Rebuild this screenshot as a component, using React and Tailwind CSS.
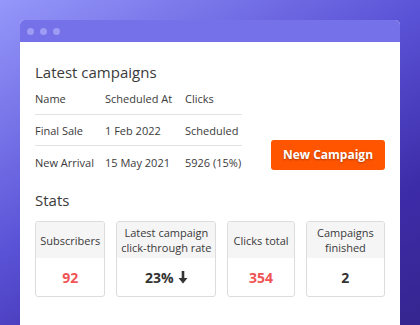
import React from 'react';

const rows = [
  { name: 'Final Sale', date: '1 Feb 2022', clicks: 'Scheduled' },
  { name: 'New Arrival', date: '15 May 2021', clicks: '5926 (15%)' },
];

const stats = [
  { label: 'Subscribers', value: '92', red: true, w: 'w-[71px]' },
  { label: 'Latest campaign click-through rate', value: '23%', arrow: true, w: 'w-[101px]' },
  { label: 'Clicks total', value: '354', red: true, w: 'w-[68px]' },
  { label: 'Campaigns finished', value: '2', w: 'w-[80px]' },
];

const App = () => {
  return (
    <div
      className="w-[420px] h-[325px] overflow-hidden bg-[linear-gradient(150deg,#9597fa_0%,#5a52d6_45%,#3d2ca8_75%,#35258f_100%)] pt-5 px-5"
      style={{ fontFamily: '"Open Sans", sans-serif' }}
    >
      <div className="h-full rounded-t-[5px] overflow-hidden bg-white">
        {/* Title bar */}
        <div className="h-[22px] bg-[#7571e8] flex items-center gap-[6px] pl-[7px]">
          <span className="w-[7px] h-[7px] rounded-full bg-[#9e9bf4]" />
          <span className="w-[7px] h-[7px] rounded-full bg-[#9e9bf4]" />
          <span className="w-[7px] h-[7px] rounded-full bg-[#9e9bf4]" />
        </div>

        <div className="px-[15px] pt-[20px] text-[#3a3a3a]">
          <h2 className="text-[15px] leading-[20px]">Latest campaigns</h2>

          <div className="flex items-start mt-[3px]">
            <div className="w-[207px] text-[11px]">
              <div className="flex h-[30px] items-center border-b border-[#e2e2e2] font-medium">
                <span className="w-[70px]">Name</span>
                <span className="w-[80px]">Scheduled At</span>
                <span>Clicks</span>
              </div>
              {rows.map((r, i) => (
                <div
                  key={r.name}
                  className={`flex h-[31px] pt-[3px] items-center ${i === 0 ? 'border-b border-[#e2e2e2]' : ''}`}
                >
                  <span className="w-[70px]">{r.name}</span>
                  <span className="w-[80px]">{r.date}</span>
                  <span>{r.clicks}</span>
                </div>
              ))}
            </div>
            <button className="ml-[29px] mt-[55px] w-[114px] h-[30px] rounded-[3px] bg-[#ff5500] text-white text-[12px] font-bold [text-shadow:0_1px_2px_rgba(0,0,0,0.35)]">
              New Campaign
            </button>
          </div>

          <h2 className="text-[15px] leading-[20px] mt-[13px]">Stats</h2>

          <div className="flex gap-[11px] mt-[11px]">
            {stats.map((s) => (
              <div
                key={s.label}
                className={`${s.w} h-[76px] rounded-[3px] border border-[#dcdcdc] overflow-hidden flex flex-col`}
              >
                <div className="h-[36px] bg-[#f5f5f5] flex items-center justify-center text-center text-[11px] leading-[15px] px-[2px]">
                  {s.label}
                </div>
                <div
                  className={`flex-1 flex items-center justify-center text-[14px] font-bold ${
                    s.red ? 'text-[#f05454]' : 'text-[#333]'
                  }`}
                >
                  {s.value}
                  {s.arrow && (
                    <svg width="10" height="13" viewBox="0 0 10 13" className="ml-[4px]">
                      <path d="M5 0v9" stroke="#333" strokeWidth="2.6" />
                      <path d="M0.5 7 5 12.5 9.5 7z" fill="#333" />
                    </svg>
                  )}
                </div>
              </div>
            ))}
          </div>
        </div>
      </div>
    </div>
  );
};

export default App;
